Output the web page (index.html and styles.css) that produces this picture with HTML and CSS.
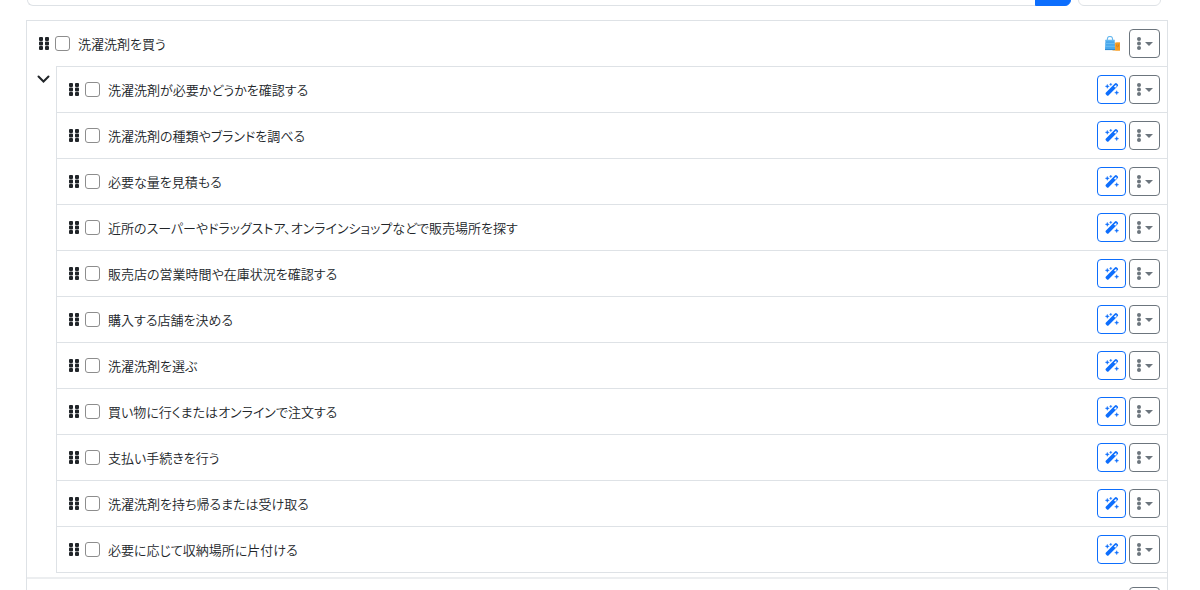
FILE: index.html
```
<!DOCTYPE html>
<html lang="ja">
<head>
<meta charset="utf-8">
<title>タスク</title>
<link rel="stylesheet" href="styles.css">
</head>
<body>
<svg class="symbols" aria-hidden="true">
  <symbol id="grip" viewBox="0 0 10 13"><path d="M1 0h2q1 0 1 1v2q0 1-1 1H1Q0 4 0 3V1q0-1 1-1zM7 0h2q1 0 1 1v2q0 1-1 1H7Q6 4 6 3V1q0-1 1-1zM1 4.600h2q1 0 1 1v1.800q0 1-1 1H1q-1 0-1-1V5.600q0-1 1-1zM7 4.600h2q1 0 1 1v1.800q0 1-1 1H7q-1 0-1-1V5.600q0-1 1-1zM1 9h2q1 0 1 1v2q0 1-1 1H1q-1 0-1-1v-2q0-1 1-1zM7 9h2q1 0 1 1v2q0 1-1 1H7q-1 0-1-1v-2q0-1 1-1z"/></symbol>
  <symbol id="dots" viewBox="0 0 4 13"><circle cx="2" cy="2" r="2"/><circle cx="2" cy="6.500" r="2"/><circle cx="2" cy="11" r="2"/></symbol>
  <symbol id="caret" viewBox="0 0 8 4"><path d="M0 0h8L4 4z"/></symbol>
  <symbol id="wand" viewBox="0 0 14 13"><path d="M1 9.400 9.900.600q1-1 2 0l.7.700q1 1 0 2L3.700 12.200q-1 1-2 0L1 11.400q-1-1 0-2zM9 3.500l1.200 1.200 1.700-1.800-1-1z" fill-rule="evenodd"/><path d="M2.300 1.200l.6 1.500 1.500.6-1.500.6-.6 1.500-.6-1.500-1.500-.6 1.500-.6zM5.800 0l.4 1 1 .4-1 .4-.4 1-.4-1-1-.4 1-.4zM11.700 7.600l.6 1.500 1.500.6-1.500.6-.6 1.500-.6-1.500-1.500-.6 1.500-.6z" stroke="currentColor" stroke-width=".3"/></symbol>
</svg>

<div class="entry-bar">
  <input class="entry-input" type="text" aria-label="新しいタスク">
  <button class="entry-add" type="button" aria-label="追加"></button>
  <button class="entry-option" type="button" aria-label="オプション"></button>
</div>

<main>
<ul class="tasks">
  <li class="task">
    <div class="row">
      <svg class="grip"><use href="#grip"/></svg>
      <label class="name"><input class="check" type="checkbox">洗濯洗剤を買う</label>
      <svg class="bag" viewBox="0 0 16 16" aria-hidden="true">
        <path d="M8 7h8v8.500H8z" fill="#f9a735"/><path d="M12 7h4v8.500h-5z" fill="#f59b23"/><path d="M12.500 9v2q1 1 1.800 0V9" fill="none" stroke="#c97a1c" stroke-width=".8"/>
        <path d="M2.500 5V3.500q0-3 2.800-3t2.800 3V5" fill="none" stroke="#68b9ef" stroke-width="1.100"/>
        <path d="M.5 4h9.700l.5 11H0z" fill="#4aa8ec"/><path d="M.5 5h9.700M.3 8h10.200M0 11h10.600" stroke="#6bbef3"/><path d="M0 14.500h10.700" stroke="#2b86d0"/>
      </svg>
      <button class="btn menu" type="button" aria-label="メニュー"><svg class="dots"><use href="#dots"/></svg><svg class="caret"><use href="#caret"/></svg></button>
    </div>
    <div class="branch">
      <button class="toggle" type="button" aria-label="折りたたむ"><svg class="chevron" viewBox="0 0 13 8"><path d="M1.500 1.500l5 5 5-5"/></svg></button>
      <ul class="subtasks" id="subtasks"></ul>
    </div>
  </li>
  <li class="task">
    <div class="row">
      <svg class="grip"><use href="#grip"/></svg>
      <label class="name"><input class="check" type="checkbox" aria-label="タスク"></label>
      <button class="btn menu" type="button" aria-label="メニュー"><svg class="dots"><use href="#dots"/></svg><svg class="caret"><use href="#caret"/></svg></button>
    </div>
  </li>
</ul>
</main>
<script src="script.js"></script>
</body>
</html>
```
FILE: styles.css
```
* {
  box-sizing: border-box;
}

body {
  margin: 0;
  padding: 0 32px 0 26px;
  height: 100vh;
  overflow: hidden;
  background: #fff;
  color: #212529;
  font-family: "Noto Sans CJK JP", sans-serif;
  font-size: 13px;
  font-weight: 350;
  line-height: 21px;
  font-feature-settings: "palt";
}

ul {
  list-style: none;
  margin: 0;
  padding: 0;
}

button {
  font: inherit;
  cursor: pointer;
}

svg {
  display: block;
  flex: none;
  fill: currentColor;
}

.symbols {
  position: absolute;
  width: 0;
  height: 0;
}

.entry-bar {
  display: flex;
  align-items: flex-end;
  height: 6px;
  margin: 0 7px 14px 1px;
  overflow: hidden;
}

.entry-input,
.entry-add,
.entry-option {
  flex: none;
  height: 36px;
  border: 1px solid #dee2e6;
  background: #fff;
}

.entry-input {
  flex: 1;
  min-width: 0;
  border-right: 0;
  border-radius: 6px 0 0 6px;
}

.entry-add {
  width: 36px;
  margin-right: 7px;
  border-color: #0d6efd;
  border-radius: 0 6px 6px 0;
  background: #0d6efd;
}

.entry-option {
  width: 83px;
  border-radius: 6px;
}

.tasks {
  border: 1px solid #dee2e6;
}

.task + .task {
  border-top: 2px solid #eceef0;
}

.row {
  display: flex;
  align-items: center;
  padding: 8px 7px 8px 12px;
}

.grip {
  width: 10px;
  height: 13px;
}

.name {
  flex: 1;
  display: flex;
  align-items: center;
  gap: 8px;
  margin-left: 6px;
}

.check {
  appearance: none;
  width: 15px;
  height: 15px;
  margin: 0;
  border: 1px solid #8d8d8d;
  border-radius: 3px;
  background: #fff;
}

.check:checked {
  background: #0d6efd;
}

.btn {
  display: flex;
  align-items: center;
  justify-content: center;
  height: 29px;
  padding: 0;
  border: 1px solid;
  border-radius: 4px;
  background: #fff;
}

.magic {
  width: 29px;
  margin-right: 3px;
  color: #0d6efd;
}

.menu {
  width: 31px;
  gap: 4px;
  color: #6c757d;
}

.wand {
  width: 14px;
  height: 13px;
}

.dots {
  width: 4px;
  height: 13px;
}

.caret {
  width: 8px;
  height: 4px;
}

.bag {
  width: 15px;
  height: 15px;
  margin-right: 9px;
}

.branch {
  display: flex;
  align-items: flex-start;
  padding-bottom: 4px;
}

.toggle {
  flex: none;
  width: 29px;
  padding: 9px 0 0 10px;
  border: 0;
  background: none;
  color: #212529;
}

.chevron {
  width: 13px;
  height: 8px;
  fill: none;
  stroke: currentColor;
  stroke-width: 2;
  stroke-linecap: round;
}

.subtasks {
  flex: 1;
  border: 1px solid #dee2e6;
  border-right: 0;
}

.subtasks li + li {
  border-top: 1px solid #dee2e6;
}
```
FILE: script.js
```
const names = [
  "洗濯洗剤が必要かどうかを確認する",
  "洗濯洗剤の種類やブランドを調べる",
  "必要な量を見積もる",
  "近所のスーパーやドラッグストア、オンラインショップなどで販売場所を探す",
  "販売店の営業時間や在庫状況を確認する",
  "購入する店舗を決める",
  "洗濯洗剤を選ぶ",
  "買い物に行くまたはオンラインで注文する",
  "支払い手続きを行う",
  "洗濯洗剤を持ち帰るまたは受け取る",
  "必要に応じて収納場所に片付ける"
];

document.getElementById("subtasks").innerHTML = names.map(name => `
  <li class="row">
    <svg class="grip"><use href="#grip"/></svg>
    <label class="name"><input class="check" type="checkbox">${name}</label>
    <button class="btn magic" type="button" aria-label="分解"><svg class="wand"><use href="#wand"/></svg></button>
    <button class="btn menu" type="button" aria-label="メニュー"><svg class="dots"><use href="#dots"/></svg><svg class="caret"><use href="#caret"/></svg></button>
  </li>`).join("");
```
